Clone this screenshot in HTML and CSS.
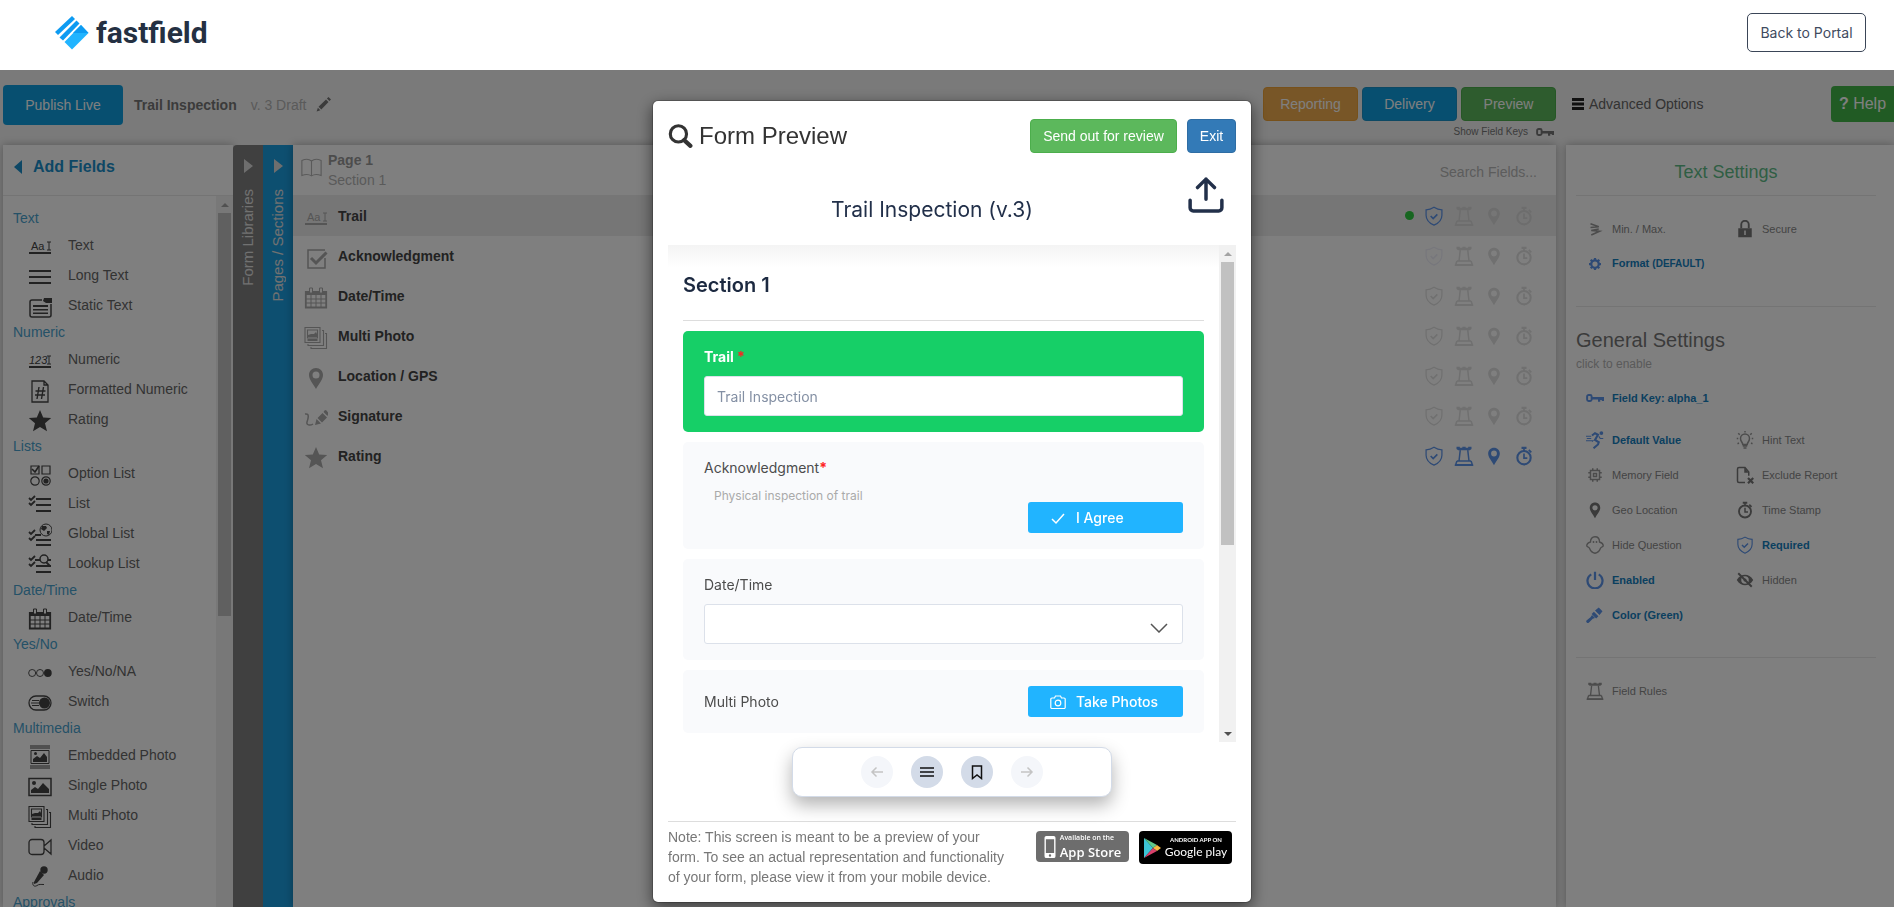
FILE: index.html
```
<!DOCTYPE html>
<html lang="en">
<head>
    <meta charset="UTF-8">
    <title>FastField Form Builder</title>
    <link rel="stylesheet" href="styles.css">
</head>
<body>

    <!-- icon set -->
    <svg class="sprite" xmlns="http://www.w3.org/2000/svg">
        <symbol id="i-text" viewBox="0 0 24 24"><text x="3" y="15" font-size="11">Aa</text><path d="M19 7h4M19 15h4M21 7v8" fill="none" stroke="currentColor" stroke-width="1"/><path d="M1 17h22v2H1z"/></symbol>
        <symbol id="i-numeric" viewBox="0 0 24 24"><text x="1" y="15" font-size="11" font-style="italic">123</text><path d="M19 7h4M19 15h4M21 7v8" fill="none" stroke="currentColor" stroke-width="1"/><path d="M1 17h22v2H1z"/></symbol>
        <symbol id="i-lines" viewBox="0 0 24 24"><path d="M1 5h22v2H1zM1 11h22v2H1zM1 17h22v2H1z"/></symbol>
        <symbol id="i-static" viewBox="0 0 24 24"><path d="M14 5H4a2 2 0 0 0-2 2v13a2 2 0 0 0 2 2h17a2 2 0 0 0 2-2V9" fill="none" stroke="currentColor" stroke-width="1.5"/><path d="M5 10h15v2H5zM5 14h15v1.500H5zM5 17.500h15V19H5zM16 3h8v5h-6l-3-2z"/></symbol>
        <symbol id="i-hash" viewBox="0 0 24 24"><path d="M4 2h12l4 4v17H4zM16 2v4h4" fill="none" stroke="currentColor" stroke-width="1.300"/><path d="M11 8l-2 12M15.500 8l-2 12M7.500 12h10M7 16h10" fill="none" stroke="currentColor" stroke-width="1.400"/></symbol>
        <symbol id="i-star" viewBox="0 0 24 24"><path d="M12 1l3.200 7.500 8 .6-6.200 5.200 2 8-7-4.300-7 4.300 2-8L.8 9.100l8-.6z"/></symbol>
        <symbol id="i-option" viewBox="0 0 24 24"><g fill="none" stroke="currentColor" stroke-width="1.200"><path d="M3 3h8v8H3zM14 3h8v8h-8z"/><circle cx="7" cy="18" r="4.200"/><circle cx="18" cy="18" r="4.200"/><path d="M4 6l3 3 4-6" stroke-width="1.600"/></g><circle cx="18" cy="18" r="2.600"/></symbol>
        <symbol id="i-list" viewBox="0 0 24 24"><path d="M8 5h15v2H8zM8 11h15v2H8zM8 17h15v2H8z"/><path d="M1 5l2 2 4-4M1 10l2 2 4-4" fill="none" stroke="currentColor" stroke-width="1.800"/></symbol>
        <symbol id="i-global" viewBox="0 0 24 24"><path d="M7 11h6v2H7zM8 16h15v2H8zM8 21h15v2H8z"/><path d="M1 9l2 2 4-4M1 15l2 2 4-4" fill="none" stroke="currentColor" stroke-width="1.800"/><circle cx="18" cy="7" r="6" fill="none" stroke="currentColor"/><path d="M14 3l4 0 1 2-3 3-3-2zM19 8l3 0-1 4-2-1z"/></symbol>
        <symbol id="i-lookup" viewBox="0 0 24 24"><path d="M7 6h5v2H7zM20 6h3v2h-3zM8 12h15v2H8zM8 18h15v2H8z"/><path d="M1 5l2 2 4-4M1 11l2 2 4-4M18 9l4 4" fill="none" stroke="currentColor" stroke-width="1.800"/><circle cx="16" cy="6" r="4" fill="none" stroke="currentColor" stroke-width="1.500"/></symbol>
        <symbol id="i-calendar" viewBox="0 0 24 24"><path d="M2 5h20v4H2z"/><path d="M1.800 6h20.400v15.500H1.800z" fill="none" stroke="currentColor" stroke-width="1.800"/><path d="M2 13h20M2 17h20M7 9v12M12 9v12M17 9v12" stroke="currentColor" stroke-width="1"/><path d="M5.500 2h3v5h-3zM15.500 2h3v5h-3z" stroke="currentColor" fill="#fff"/></symbol>
        <symbol id="i-yesno" viewBox="0 0 26 24"><circle cx="4.500" cy="12" r="3.800" fill="none" stroke="currentColor"/><circle cx="13" cy="12" r="3.800" fill="none" stroke="currentColor"/><circle cx="21.500" cy="12" r="4.200"/></symbol>
        <symbol id="i-switch" viewBox="0 0 24 24"><rect x="1" y="5" width="22" height="14" rx="7" fill="none" stroke="currentColor" stroke-width="1.300"/><circle cx="16.500" cy="12" r="5.500"/><path d="M3 12h9M4 9.500h7M4 14.500h7" stroke="currentColor"/></symbol>
        <symbol id="i-embedded" viewBox="0 0 24 24"><path d="M2 1h20M2 3h20M2 21h20M2 23h20M3 5.500h18v13H3z" fill="none" stroke="currentColor"/><path d="M5 17v-3l4-3 3 2 4-5 3 4v5z"/><circle cx="7.500" cy="8.500" r="1.500"/></symbol>
        <symbol id="i-photo" viewBox="0 0 24 24"><path d="M1 3.500h22v17H1z" fill="none" stroke="currentColor" stroke-width="1.500"/><path d="M3 18v-3l4-3 3 2 5-6 6 6v4z"/><circle cx="6" cy="8" r="2"/></symbol>
        <symbol id="i-photos" viewBox="0 0 24 24"><path d="M1 1.500h15v15H1zM3.500 4h10v8h-10zM18 4.500h1.500V19.500H4V18M21 7.500h1.500V22.500H7V21" fill="none" stroke="currentColor" stroke-width="1.100"/><path d="M4 11V9l3-1 3 0 2-2 1 2v3zM3.500 13h10v2h-10z"/></symbol>
        <symbol id="i-video" viewBox="0 0 24 24"><path d="M4 4.500h9a3 3 0 0 1 3 3v9a3 3 0 0 1-3 3H4a3 3 0 0 1-3-3v-9a3 3 0 0 1 3-3zM23 5v14l-7-6v-2z" fill="none" stroke="currentColor" stroke-width="1.300"/></symbol>
        <symbol id="i-audio" viewBox="0 0 24 24"><circle cx="16" cy="5" r="3.700"/><path d="M12 6l4 4-7 8-3 1 0-2z"/><path d="M5 17c-1 4 2 5 4 3.500s4-1 7-1" fill="none" stroke="currentColor"/></symbol>
        <symbol id="i-check" viewBox="0 0 24 24"><path d="M21 12v10H4V4h17" fill="none" stroke="currentColor" stroke-width="1.500"/><path d="M7 12l5 5L22.500 6.500" fill="none" stroke="currentColor" stroke-width="3"/></symbol>
        <symbol id="i-pin" viewBox="0 0 24 24"><path fill-rule="evenodd" d="M12 2c-4 0-7 3-7 7 0 5 4.500 9 7 14 2.500-5 7-9 7-14 0-4-3-7-7-7zm0 3.500a3.500 3.500 0 1 1 0 7 3.500 3.500 0 0 1 0-7z"/></symbol>
        <symbol id="i-sign" viewBox="0 0 24 24"><path d="M1 8c5-1 3 5 2 8s3 4 6 2" fill="none" stroke="currentColor" stroke-width="1.500"/><path d="M11 19l1.500-6 4.500 4.500zM13.500 12l5-5 4.500 4.500-5 5zM19.500 6l1-1.500a1.500 1.500 0 0 1 2 0L24 6.500v2L23.500 10z"/></symbol>
        <symbol id="i-shield" viewBox="0 0 24 24"><path d="M12 1.500c3 2 6 3 9.500 3V11c0 6-4 9.500-9.500 12-5.500-2.500-9.500-6-9.500-12V4.500c3.500 0 6.500-1 9.500-3z" fill="none" stroke="currentColor" stroke-width="1.500"/><path d="M8 12l3 3 5-5" fill="none" stroke="currentColor" stroke-width="2"/></symbol>
        <symbol id="i-rook" viewBox="0 0 24 24"><path d="M3 1h4v1h3V1h4v1h3V1h4v2.500l-2 1.500H5L3 3.500z"/><path d="M7.500 5L6 18M16.500 5L18 18M3.500 18h17M3.500 18L2 22.500h20L20.500 18" fill="none" stroke="currentColor" stroke-width="1.800"/><path d="M1 22h22v2H1z"/></symbol>
        <symbol id="i-timer" viewBox="0 0 24 24"><circle cx="12" cy="14" r="8" fill="none" stroke="currentColor" stroke-width="2.500"/><path d="M9 1h6v2.500h-2V6h-2V3.500H9zM18.500 4l3 3-1.500 1.500-3-3z"/><path d="M12 9v5.500h4" fill="none" stroke="currentColor" stroke-width="2"/></symbol>
        <symbol id="i-key" viewBox="0 0 24 24"><path d="M3.500 8h2A2 2 0 0 1 7.500 10v4a2 2 0 0 1-2 2h-2a2 2 0 0 1-2-2v-4a2 2 0 0 1 2-2z" fill="none" stroke="currentColor" stroke-width="2.600"/><path d="M8 10.500h16V16h-3v-1.500h-2V17h-3v-3H8z"/></symbol>
        <symbol id="i-minmax" viewBox="0 0 24 24"><path d="M6 5l11 4-11 1M17 12L7 14l11 1L7 20" fill="none" stroke="currentColor" stroke-width="2.200"/></symbol>
        <symbol id="i-lock" viewBox="0 0 24 24"><path fill-rule="evenodd" d="M3 11h18v12H3zm8 3v6h2v-6z"/><path d="M7 11V6a5 5 0 0 1 10 0v5" fill="none" stroke="currentColor" stroke-width="2.500"/></symbol>
        <symbol id="i-gear" viewBox="0 0 24 24"><circle cx="12" cy="12" r="5" fill="none" stroke="currentColor" stroke-width="3"/><path d="M12 4v3M12 17v3M4 12h3M17 12h3M6.300 6.300l2 2M15.700 15.700l2 2M6.300 17.700l2-2M15.700 8.300l2-2" stroke="currentColor" stroke-width="3"/></symbol>
        <symbol id="i-run" viewBox="0 0 24 24"><circle cx="20.500" cy="2.800" r="2.500"/><path d="M8 6l4-3 4 2-4 7 5 3-1 3-6 5" fill="none" stroke="currentColor" stroke-width="2.800"/><path d="M17 7l2 3h4M0 7h7M1 10h6M0 13h9l-1 1" fill="none" stroke="currentColor" stroke-width="1.600"/></symbol>
        <symbol id="i-bulb" viewBox="0 0 24 24"><path d="M9 18c0-3-3-4-3-8a6 6 0 0 1 12 0c0 4-3 5-3 8zM9 20h6M10 22.500h4M12 0v2M1 10h2M21 10h2M3 3l2 2M21 3l-2 2M2 17l2-1M22 17l-2-1" fill="none" stroke="currentColor" stroke-width="2"/></symbol>
        <symbol id="i-chip" viewBox="0 0 24 24"><path d="M6 6h12v12H6zM10 10h4v4h-4zM9 3v3M15 3v3M9 18v3M15 18v3M3 9h3M3 15h3M18 9h3M18 15h3" fill="none" stroke="currentColor" stroke-width="2"/></symbol>
        <symbol id="i-exclude" viewBox="0 0 24 24"><path d="M12 22H4a2 2 0 0 1-2-2V4a2 2 0 0 1 2-2h8l5 6v5" fill="none" stroke="currentColor" stroke-width="2"/><path d="M11 2l6 7h-6z"/><path d="M16 16l7 7M23 16l-7 7" stroke="currentColor" stroke-width="3"/></symbol>
        <symbol id="i-ghost" viewBox="0 0 24 24"><path d="M12 1c4 0 6 3 6 7 3 1 5 3 5 5s-3 1-4 4-3 5-7 6c-4-1-6-3-7-6s-4-2-4-4 2-4 5-5c0-4 2-7 6-7z" fill="none" stroke="currentColor" stroke-width="1.800"/><circle cx="10" cy="8" r="1.200"/><circle cx="14" cy="8" r="1.200"/></symbol>
        <symbol id="i-power" viewBox="0 0 24 24"><path d="M7 4.500a10 10 0 1 0 10 0M12 1v11" fill="none" stroke="currentColor" stroke-width="3"/></symbol>
        <symbol id="i-eye" viewBox="0 0 24 24"><path fill-rule="evenodd" d="M1 12c3-5 7-7 11-7s8 2 11 7c-3 5-7 7-11 7s-8-2-11-7zm11-5a5 5 0 1 0 0 10 5 5 0 0 0 0-10z"/><circle cx="12" cy="12" r="2"/><path d="M3 3l18 18" stroke="currentColor" stroke-width="2.500"/></symbol>
        <symbol id="i-brush" viewBox="0 0 24 24"><path d="M12 6l5-4 5 5-4 5zM10.500 7.500l6 6-3 3-6-6zM8 12l4 4-3 1-5 5a2 2 0 0 1-3-3l5-4z"/></symbol>
        <symbol id="i-book" viewBox="0 0 24 24"><path d="M12 4C9 1.500 5 1.500 1 3.500v17c4-1.500 8-1.500 11 .5 3-2 7-2 11-.5v-17c-4-2-8-2-11 .5zM12 4v17" fill="none" stroke="currentColor" stroke-width="1.300"/></symbol>
        <symbol id="i-pencil" viewBox="0 0 24 24"><path d="M1 23l2-6 4 4zM4 15.500L16 4l4 4L8.500 20zM17.500 2.500L20 0l4 4-2.500 2.500z"/></symbol>
    </svg>

    <header class="site-header">
        <a class="logo" href="#">
            <svg width="34" height="34" viewBox="0 0 34 34">
                <path d="M17 0l3 3L3 19l-3-3z" fill="#0d9bf2"/>
                <path d="M21.500 4.500l3 3L8 24.500l-3.500-3z" fill="#0d9bf2"/>
                <path d="M26 9l7.500 8L17 33.500 9.500 26z" fill="#21b4ff"/>
                <path d="M26 9l7.500 8H18z" fill="#0d9bf2"/>
            </svg>
            <span>fastfield</span>
        </a>
        <button class="back-btn" type="button">Back to Portal</button>
    </header>

    <div class="app">
        <div class="toolbar">
            <button class="btn publish" type="button">Publish Live</button>
            <strong class="form-name">Trail Inspection</strong>
            <span class="version">v. 3 Draft</span>
            <svg class="edit"><use href="#i-pencil"/></svg>

            <div class="actions">
                <div class="action-row">
                    <button class="btn reporting" type="button">Reporting</button>
                    <button class="btn delivery" type="button">Delivery</button>
                    <button class="btn preview" type="button">Preview</button>
                </div>
                <div class="field-keys">Show Field Keys <svg><use href="#i-key"/></svg></div>
            </div>
            <div class="toolbar-right">
                <button class="advanced" type="button"><svg viewBox="0 0 12 12"><path d="M0 0h12v3H0zM0 4.500h12v3H0zM0 9h12v3H0z"/></svg>Advanced Options</button>
                <button class="help" type="button"><b>?</b> Help</button>
            </div>
        </div>

        <div class="workspace">
            <aside class="add-fields">
                <h2><span class="arrow-left"></span>Add Fields</h2>
                <div class="field-scroll">
                    <div class="field-list">
                        <h3>Text</h3>
                        <ul>
                            <li><svg><use href="#i-text"/></svg>Text</li>
                            <li><svg><use href="#i-lines"/></svg>Long Text</li>
                            <li><svg><use href="#i-static"/></svg>Static Text</li>
                        </ul>
                        <h3>Numeric</h3>
                        <ul>
                            <li><svg><use href="#i-numeric"/></svg>Numeric</li>
                            <li><svg><use href="#i-hash"/></svg>Formatted Numeric</li>
                            <li><svg><use href="#i-star"/></svg>Rating</li>
                        </ul>
                        <h3>Lists</h3>
                        <ul>
                            <li><svg><use href="#i-option"/></svg>Option List</li>
                            <li><svg><use href="#i-list"/></svg>List</li>
                            <li><svg><use href="#i-global"/></svg>Global List</li>
                            <li><svg><use href="#i-lookup"/></svg>Lookup List</li>
                        </ul>
                        <h3>Date/Time</h3>
                        <ul>
                            <li><svg><use href="#i-calendar"/></svg>Date/Time</li>
                        </ul>
                        <h3>Yes/No</h3>
                        <ul>
                            <li><svg><use href="#i-yesno"/></svg>Yes/No/NA</li>
                            <li><svg><use href="#i-switch"/></svg>Switch</li>
                        </ul>
                        <h3>Multimedia</h3>
                        <ul>
                            <li><svg><use href="#i-embedded"/></svg>Embedded Photo</li>
                            <li><svg><use href="#i-photo"/></svg>Single Photo</li>
                            <li><svg><use href="#i-photos"/></svg>Multi Photo</li>
                            <li><svg><use href="#i-video"/></svg>Video</li>
                            <li><svg><use href="#i-audio"/></svg>Audio</li>
                        </ul>
                        <h3>Approvals</h3>
                    </div>
                    <div class="scrollbar"><i class="up"></i><div class="thumb"></div></div>
                </div>
            </aside>

            <div class="side-tab libraries"><span class="arrow-right"></span><span class="tab-label">Form Libraries</span></div>
            <div class="side-tab pages"><span class="arrow-right"></span><span class="tab-label">Pages / Sections</span></div>

            <main class="canvas">
                <div class="canvas-head">
                    <svg><use href="#i-book"/></svg>
                    <div class="crumb"><strong>Page 1</strong><span>Section 1</span></div>
                    <input type="text" placeholder="Search Fields..." aria-label="Search Fields">
                </div>
                <div class="row selected">
                    <svg class="type"><use href="#i-text"/></svg><span>Trail</span>
                    <i class="dot"></i>
                    <div class="flags"><svg class="on"><use href="#i-shield"/></svg><svg><use href="#i-rook"/></svg><svg><use href="#i-pin"/></svg><svg><use href="#i-timer"/></svg></div>
                </div>
                <div class="row">
                    <svg class="type"><use href="#i-check"/></svg><span>Acknowledgment</span>
                    <div class="flags"><svg class="faint"><use href="#i-shield"/></svg><svg><use href="#i-rook"/></svg><svg><use href="#i-pin"/></svg><svg><use href="#i-timer"/></svg></div>
                </div>
                <div class="row">
                    <svg class="type"><use href="#i-calendar"/></svg><span>Date/Time</span>
                    <div class="flags"><svg><use href="#i-shield"/></svg><svg><use href="#i-rook"/></svg><svg><use href="#i-pin"/></svg><svg><use href="#i-timer"/></svg></div>
                </div>
                <div class="row">
                    <svg class="type"><use href="#i-photos"/></svg><span>Multi Photo</span>
                    <div class="flags"><svg><use href="#i-shield"/></svg><svg><use href="#i-rook"/></svg><svg><use href="#i-pin"/></svg><svg><use href="#i-timer"/></svg></div>
                </div>
                <div class="row">
                    <svg class="type"><use href="#i-pin"/></svg><span>Location / GPS</span>
                    <div class="flags"><svg><use href="#i-shield"/></svg><svg><use href="#i-rook"/></svg><svg><use href="#i-pin"/></svg><svg><use href="#i-timer"/></svg></div>
                </div>
                <div class="row">
                    <svg class="type"><use href="#i-sign"/></svg><span>Signature</span>
                    <div class="flags"><svg><use href="#i-shield"/></svg><svg><use href="#i-rook"/></svg><svg><use href="#i-pin"/></svg><svg><use href="#i-timer"/></svg></div>
                </div>
                <div class="row">
                    <svg class="type"><use href="#i-star"/></svg><span>Rating</span>
                    <div class="flags all-on"><svg><use href="#i-shield"/></svg><svg><use href="#i-rook"/></svg><svg><use href="#i-pin"/></svg><svg><use href="#i-timer"/></svg></div>
                </div>
            </main>

            <aside class="settings">
                <h2>Text Settings</h2>
                <div class="options text-options">
                    <button type="button"><svg><use href="#i-minmax"/></svg>Min. / Max.</button>
                    <button type="button"><svg class="dark"><use href="#i-lock"/></svg>Secure</button>
                    <button type="button" class="on"><svg><use href="#i-gear"/></svg><span>Format <small>(DEFAULT)</small></span></button>
                </div>
                <h3>General Settings</h3>
                <p>click to enable</p>
                <div class="options">
                    <button type="button" class="on key"><svg><use href="#i-key"/></svg>Field Key: alpha_1</button>
                    <button type="button" class="on"><svg><use href="#i-run"/></svg>Default Value</button>
                    <button type="button"><svg><use href="#i-bulb"/></svg>Hint Text</button>
                    <button type="button"><svg><use href="#i-chip"/></svg>Memory Field</button>
                    <button type="button"><svg class="dark"><use href="#i-exclude"/></svg>Exclude Report</button>
                    <button type="button"><svg class="dark"><use href="#i-pin"/></svg>Geo Location</button>
                    <button type="button"><svg class="dark"><use href="#i-timer"/></svg>Time Stamp</button>
                    <button type="button"><svg><use href="#i-ghost"/></svg>Hide Question</button>
                    <button type="button" class="on"><svg><use href="#i-shield"/></svg>Required</button>
                    <button type="button" class="on"><svg><use href="#i-power"/></svg>Enabled</button>
                    <button type="button"><svg class="dark"><use href="#i-eye"/></svg>Hidden</button>
                    <button type="button" class="on"><svg><use href="#i-brush"/></svg>Color (Green)</button>
                </div>
                <div class="options rules">
                    <button type="button"><svg><use href="#i-rook"/></svg>Field Rules</button>
                </div>
            </aside>
        </div>
    </div>

    <!-- form preview dialog -->
    <div class="backdrop">
        <div class="modal" role="dialog" aria-label="Form Preview">
            <div class="modal-head">
                <svg viewBox="0 0 24 24"><circle cx="10" cy="9.500" r="7.800" fill="none" stroke="#333" stroke-width="3"/><path d="M15.500 15.500L21.500 21" stroke="#333" stroke-width="4" stroke-linecap="round"/></svg>
                <h1>Form Preview</h1>
                <button class="btn review" type="button">Send out for review</button>
                <button class="btn exit" type="button">Exit</button>
            </div>
            <div class="preview-head">
                <span>Trail Inspection (v.3)</span>
                <button type="button" aria-label="Submit">
                    <svg viewBox="0 0 34 34"><path d="M17 21V2M9 10l8-8 8 8M2 22v7a3 3 0 0 0 3 3h24a3 3 0 0 0 3-3v-7" fill="none" stroke="#22304a" stroke-width="3.300" stroke-linecap="round" stroke-linejoin="round"/></svg>
                </button>
            </div>
            <div class="preview-body">
                <div class="preview-form">
                    <h2>Section 1</h2>
                    <div class="card green">
                        <label for="trail">Trail <em>*</em></label>
                        <input type="text" id="trail" value="Trail Inspection">
                    </div>
                    <div class="card">
                        <div class="label">Acknowledgment<em>*</em></div>
                        <div class="ack">
                            <span>Physical inspection of trail</span>
                            <button class="blue-btn" type="button"><svg viewBox="0 0 16 16"><path d="M2 9l4 4 8-9" fill="none" stroke="#fff" stroke-width="1.500"/></svg>I Agree</button>
                        </div>
                    </div>
                    <div class="card">
                        <label for="date">Date/Time</label>
                        <div class="select">
                            <select id="date"><option></option></select>
                            <svg viewBox="0 0 18 10"><path d="M1 1l8 8 8-8" fill="none" stroke="#555" stroke-width="1.500"/></svg>
                        </div>
                    </div>
                    <div class="card inline">
                        <div class="label">Multi Photo</div>
                        <button class="blue-btn" type="button"><svg viewBox="0 0 16 16"><g fill="none" stroke="#fff" stroke-width="1.200"><path d="M2 4h2.500l1-2h5l1 2H14a1.200 1.200 0 0 1 1.200 1.200v8A1.200 1.200 0 0 1 14 14.500H2a1.200 1.200 0 0 1-1.200-1.300v-8A1.200 1.200 0 0 1 2 4z"/><circle cx="8" cy="9" r="2.800"/></g></svg>Take Photos</button>
                    </div>
                </div>
                <div class="scrollbar"><i class="up"></i><div class="thumb"></div><i class="down"></i></div>
            </div>
            <div class="pager-wrap">
                <nav class="pager">
                    <button type="button" class="off" aria-label="Previous"><svg viewBox="0 0 16 16"><path d="M14 8H3M7.500 3.500L3 8l4.500 4.500"/></svg></button>
                    <button type="button" aria-label="Sections"><svg viewBox="0 0 16 16"><path d="M1 4h14M1 8h14M1 12h14"/></svg></button>
                    <button type="button" aria-label="Bookmark"><svg viewBox="0 0 16 16"><path d="M3.500 2h9v12.500L8 11l-4.500 3.500z"/></svg></button>
                    <button type="button" class="off" aria-label="Next"><svg viewBox="0 0 16 16"><path d="M2 8h11M8.500 3.500L13 8l-4.500 4.500"/></svg></button>
                </nav>
            </div>
            <div class="modal-foot">
                <p>Note: This screen is meant to be a preview of your form. To see an actual representation and functionality of your form, please view it from your mobile device.</p>
                <a class="badge apple" href="#">
                    <svg viewBox="0 0 12 24"><path fill="#fff" fill-rule="evenodd" d="M2 0h8a2 2 0 0 1 2 2v20a2 2 0 0 1-2 2H2a2 2 0 0 1-2-2V2a2 2 0 0 1 2-2zM1.500 3.500v15h9v-15zM6 20a1.300 1.300 0 1 0 0 2.600A1.300 1.300 0 0 0 6 20z"/></svg>
                    <span><small>Available on the</small>App Store</span>
                </a>
                <a class="badge google" href="#">
                    <svg viewBox="0 0 17 20"><path d="M0 0v20l9-10z" fill="#3cc4d6"/><path d="M0 0l13 7-4 3z" fill="#5fc98b"/><path d="M13 7l4 3-4 3-4-3z" fill="#f5b942"/><path d="M0 20l9-10 4 3z" fill="#d9416b"/></svg>
                    <span><small>ANDROID APP ON</small>Google play</span>
                </a>
            </div>
        </div>
    </div>
</body>
</html>
```
FILE: styles.css
```
* {
    box-sizing: border-box;
}

body {
    margin: 0;
    height: 100vh;
    display: flex;
    flex-direction: column;
    overflow: hidden;
    font-family: "Liberation Sans", Arial, sans-serif;
    font-size: 14px;
    line-height: 20px;
    color: #333;
}

h1, h2, h3, p, ul {
    margin: 0;
    padding: 0;
    font-weight: normal;
}

ul {
    list-style: none;
}

button, input, select {
    font: inherit;
    color: inherit;
}

button {
    padding: 0;
    border: none;
    background: none;
    cursor: pointer;
}

svg {
    flex: none;
    fill: currentColor;
}

.sprite {
    position: absolute;
    width: 0;
    height: 0;
}

/* header */
.site-header {
    flex: none;
    display: flex;
    justify-content: space-between;
    align-items: flex-start;
    height: 70px;
    padding: 13px 28px 0 55px;
    background: #fff;
}

.logo {
    display: flex;
    align-items: center;
    gap: 7px;
    height: 40px;
    font: bold 30px/40px Roboto, sans-serif;
    color: #243042;
    text-decoration: none;
}

.back-btn {
    width: 119px;
    height: 39px;
    border: 1px solid #3a4557;
    border-radius: 5px;
    font-family: Inter, sans-serif;
    color: #3f4b60;
}

/* builder */
.app {
    flex: 1;
    min-height: 0;
    display: flex;
    flex-direction: column;
    background: #f4f4f4;
}

.toolbar {
    flex: none;
    display: flex;
    align-items: flex-start;
    height: 75px;
    line-height: 34px;
    padding: 15px 0 0 3px;
}

.btn {
    height: 34px;
    border: 1px solid transparent;
    border-radius: 4px;
    color: #fff;
    line-height: 20px;
}

.publish {
    width: 120px;
    height: 40px;
    margin-right: 11px;
    background: #0e9fe0;
}

.form-name,
.version {
    line-height: 40px;
    color: #777;
}

.version {
    margin-left: 14px;
    color: #b4b4b4;
}

.edit {
    width: 15px;
    height: 15px;
    margin: 12px 0 0 10px;
    color: #777;
}

.actions {
    margin-left: auto;
    padding-top: 2px;
}

.action-row {
    display: flex;
    gap: 4px;
}

.action-row .btn {
    width: 95px;
}

.reporting {
    background: #f0ad4e;
    border-color: #eea236;
}

.delivery {
    background: #0e9fe0;
    border-color: #1b93c9;
}

.preview,
.review {
    background: #5cb85c;
    border-color: #4cae4c;
}

.field-keys {
    display: flex;
    justify-content: flex-end;
    align-items: center;
    gap: 8px;
    height: 22px;
    padding-right: 2px;
    font-size: 10px;
    color: #777;
}

.field-keys svg {
    width: 18px;
    height: 18px;
}

.toolbar-right {
    display: flex;
    justify-content: space-between;
    width: 338px;
    padding-left: 16px;
}

.advanced {
    display: flex;
    align-items: center;
    gap: 5px;
    height: 38px;
    color: #666;
}

.advanced svg {
    width: 12px;
    height: 12px;
    color: #222;
}

.help {
    width: 63px;
    height: 36px;
    margin-top: 1px;
    border-radius: 4px 0 0 4px;
    background: #43b649;
    color: #fff;
    font-size: 16px;
}

.workspace {
    flex: 1;
    min-height: 0;
    display: flex;
}

.add-fields,
.canvas,
.settings {
    background: #fff;
    box-shadow: 0 0 8px rgba(0, 0, 0, 0.3);
}

.add-fields {
    display: flex;
    flex-direction: column;
    width: 230px;
    margin-left: 3px;
}

.add-fields h2 {
    display: flex;
    align-items: center;
    gap: 11px;
    flex: none;
    height: 51px;
    padding: 0 0 6px 11px;
    border-bottom: 1px solid #e8e8e8;
    font-size: 16px;
    font-weight: bold;
    color: #1b8fcb;
}

.arrow-left {
    border: 7px solid transparent;
    border-left: none;
    border-right: 8px solid #1b8fcb;
}

.arrow-right {
    border: 7px solid transparent;
    border-right: none;
    border-left: 9px solid #ddd;
}

.field-scroll {
    flex: 1;
    min-height: 0;
    display: flex;
    justify-content: space-between;
    overflow: hidden;
}

.field-list {
    padding: 10px 0 0 10px;
}

.field-list h3 {
    font-size: 14px;
    line-height: 24px;
    color: #4aa3cf;
}

.field-list li {
    display: flex;
    align-items: center;
    gap: 16px;
    height: 30px;
    padding-left: 15px;
    color: #666;
}

.field-list svg {
    width: 24px;
    height: 24px;
    margin-top: 3px;
    color: #444;
}

.scrollbar {
    flex: none;
    display: flex;
    flex-direction: column;
    align-items: center;
    width: 17px;
    background: #f1f1f1;
}

.scrollbar .up,
.scrollbar .down {
    border: 4px solid transparent;
    border-top: none;
    border-bottom-color: #a3a3a3;
    margin: 7px 0 6px;
}

.scrollbar .down {
    border: 4px solid transparent;
    border-bottom: none;
    border-top-color: #505050;
    margin-top: auto;
}

.scrollbar .thumb {
    flex: none;
    width: 13px;
    background: #c1c1c1;
}

.add-fields .thumb {
    height: 403px;
}

.side-tab {
    display: flex;
    flex-direction: column;
    align-items: center;
    gap: 16px;
    width: 30px;
    padding-top: 14px;
    color: #e2e2e2;
    font-size: 15px;
}

.tab-label {
    writing-mode: vertical-rl;
    transform: rotate(180deg);
}

.libraries {
    background: #808080;
    border-top-left-radius: 4px;
}

.pages {
    background: #1b9ee0;
}

.canvas {
    flex: 1;
}

.canvas-head {
    display: flex;
    height: 50px;
    padding: 5px 19px 0 8px;
    color: #999;
}

.canvas-head svg {
    width: 21px;
    height: 24px;
    margin-top: 6px;
    color: #b4b4b4;
}

.crumb {
    display: flex;
    flex-direction: column;
    margin-left: 6px;
    color: #b4b4b4;
}

.crumb strong {
    color: #999;
}

.canvas-head input {
    width: 160px;
    height: 44px;
    margin-left: auto;
    padding: 0;
    border: none;
    background: none;
    text-align: right;
}

.canvas-head input::placeholder {
    color: #b8b8b8;
}

.row {
    display: flex;
    align-items: center;
    height: 40px;
    padding: 0 22px 0 11px;
    font-weight: bold;
    color: #444;
}

.row.selected {
    height: 41px;
    background: #ededed;
}

.row .type {
    width: 24px;
    height: 24px;
    margin: 4px 10px 0 0;
    color: #aaa;
    font-weight: normal;
}

.dot {
    width: 9px;
    height: 9px;
    margin: 0 10px 0 auto;
    border-radius: 50%;
    background: #2ecc40;
}

.flags {
    display: flex;
    gap: 10px;
    margin-left: auto;
    color: #e0e0e0;
}

.dot + .flags {
    margin-left: 0;
}

.selected .flags {
    color: #dadada;
}

.flags svg {
    width: 20px;
    height: 20px;
}

.flags .faint {
    color: #eeeef8;
}

.flags .on,
.flags.all-on {
    color: #5c94ea;
}

.settings {
    width: 328px;
    margin-left: 10px;
    padding: 0 18px 0 10px;
}

.settings h2 {
    height: 51px;
    padding-top: 17px;
    border-bottom: 1px solid #e8e8e8;
    text-align: center;
    font-size: 18px;
    color: #5fbd88;
}

.settings h3 {
    margin-top: 23px;
    font-size: 20px;
    color: #777;
}

.settings p {
    margin: 4px 0 6px;
    font-size: 12px;
    color: #b4b4b4;
}

.options {
    display: grid;
    grid-template-columns: 150px 150px;
    padding-left: 10px;
}

.options button {
    display: flex;
    align-items: center;
    gap: 8px;
    height: 35px;
    font-size: 11px;
    color: #888;
}

.options small {
    font-size: 10px;
}

.options svg {
    width: 18px;
    height: 18px;
    color: #999;
}

.options svg.dark {
    color: #777;
}

.options .on {
    font-weight: bold;
    color: #1580be;
}

.options .on svg {
    color: #5c94ea;
}

.options .key {
    grid-column: 1 / 3;
    margin-bottom: 7px;
}

.text-options {
    height: 111px;
    padding-top: 15px;
    align-content: start;
    border-bottom: 1px solid #e8e8e8;
}

.rules {
    margin-top: 25px;
    padding-top: 15px;
    border-top: 1px solid #e8e8e8;
}

/* dialog */
.backdrop {
    position: fixed;
    top: 70px;
    right: 0;
    bottom: 0;
    left: 0;
    display: flex;
    justify-content: center;
    align-items: flex-start;
    padding: 30px 0 0 10px;
    background: rgba(0, 0, 0, 0.5);
}

.modal {
    width: 600px;
    padding: 18px 15px 15px;
    border: 1px solid rgba(0, 0, 0, 0.2);
    border-radius: 6px;
    background: #fff;
    background-clip: padding-box;
    box-shadow: 0 5px 15px rgba(0, 0, 0, 0.5);
}

.modal-head {
    display: flex;
    align-items: center;
}

.modal-head svg {
    width: 25px;
    height: 25px;
    margin-right: 6px;
}

.modal-head h1 {
    flex: 1;
    font-size: 24px;
    line-height: 34px;
}

.review {
    width: 147px;
    margin-right: 10px;
}

.exit {
    width: 49px;
    background: #337ab7;
    border-color: #2e6da4;
}

.preview-head {
    display: flex;
    height: 92px;
    padding: 24px 12px 0 8px;
    font: 21px/66px Inter, sans-serif;
    color: #22304a;
}

.preview-head span {
    flex: 1;
    text-align: center;
}

.preview-head button {
    height: 36px;
}

.preview-head svg {
    display: block;
    width: 36px;
    height: 36px;
}

.preview-body {
    display: flex;
    height: 497px;
    background: linear-gradient(#f4f4f4, #fff 22px);
}

.preview-form {
    flex: 1;
    display: flex;
    flex-direction: column;
    gap: 10px;
    padding: 0 15px;
    font-family: Inter, sans-serif;
    overflow: hidden;
}

.preview-form h2 {
    height: 76px;
    border-bottom: 1px solid #ddd;
    font-size: 20px;
    font-weight: 600;
    line-height: 80px;
    color: #1c2940;
}

.card {
    padding: 16px 21px;
    border-radius: 5px;
    background: #f9fafc;
}

.card label,
.card .label {
    display: block;
    color: #4c4c4c;
}

.card em {
    font-style: normal;
    font-weight: bold;
    color: #f22;
}

.card.green {
    background: #16cf67;
}

.card.green label {
    font-weight: bold;
    color: #fff;
}

.card input,
.card select {
    display: block;
    width: 100%;
    height: 40px;
    margin-top: 9px;
    padding: 0 12px;
    border: 1px solid #dce1ea;
    border-radius: 3px;
    background: #fff;
    color: #8490a4;
    appearance: none;
}

.select {
    position: relative;
}

.select svg {
    position: absolute;
    right: 15px;
    top: 19px;
    width: 18px;
    height: 10px;
}

.ack {
    display: flex;
    justify-content: space-between;
    padding-top: 8px;
}

.ack span {
    padding-left: 10px;
    font-size: 12px;
    color: #aaa;
}

.ack .blue-btn {
    margin-top: 16px;
}

.card.inline {
    display: flex;
    justify-content: space-between;
    align-items: center;
}

.blue-btn {
    display: flex;
    align-items: center;
    gap: 10px;
    width: 155px;
    height: 31px;
    padding-left: 22px;
    border-radius: 3px;
    background: #21b4ff;
    color: #fff;
    font-weight: 500;
}

.blue-btn svg {
    width: 16px;
    height: 16px;
}

.preview-body .thumb {
    height: 283px;
}

.pager-wrap {
    height: 80px;
    padding-top: 5px;
    border-bottom: 1px solid #ddd;
}

.pager {
    display: flex;
    justify-content: center;
    align-items: center;
    gap: 18px;
    width: 320px;
    height: 50px;
    margin: 0 auto;
    border: 1px solid #d3dbe8;
    border-radius: 10px;
    background: #fff;
    box-shadow: 0 8px 18px rgba(0, 0, 0, 0.3);
}

.pager button {
    display: flex;
    justify-content: center;
    align-items: center;
    width: 32px;
    height: 32px;
    border-radius: 50%;
    background: #d3dbe8;
}

.pager svg {
    width: 16px;
    height: 16px;
    fill: none;
    stroke: #111;
    stroke-width: 1.5;
}

.pager .off {
    background: #f4f6fa;
}

.pager .off svg {
    stroke: #c4c4c4;
}

.modal-foot {
    display: flex;
    align-items: flex-start;
    padding: 5px 4px 0 0;
    color: #777;
}

.modal-foot p {
    width: 345px;
    margin-right: auto;
}

.badge {
    display: flex;
    align-items: center;
    justify-content: center;
    gap: 4px;
    width: 93px;
    height: 31px;
    margin: 4px 0 0 10px;
    border-radius: 4px;
    background: #6d6d6d;
    color: #fff;
    font: 600 13px/18px "Open Sans", sans-serif;
    text-decoration: none;
    white-space: nowrap;
}

.badge small {
    display: block;
    font-size: 7px;
    line-height: 10px;
}

.apple svg {
    width: 12px;
    height: 22px;
}

.google {
    height: 33px;
    background: #000;
    font: 12px/16px Lato, sans-serif;
}

.google small {
    font-size: 6px;
    font-weight: bold;
    line-height: 8px;
    text-align: center;
}

.google svg {
    width: 17px;
    height: 20px;
}
```
